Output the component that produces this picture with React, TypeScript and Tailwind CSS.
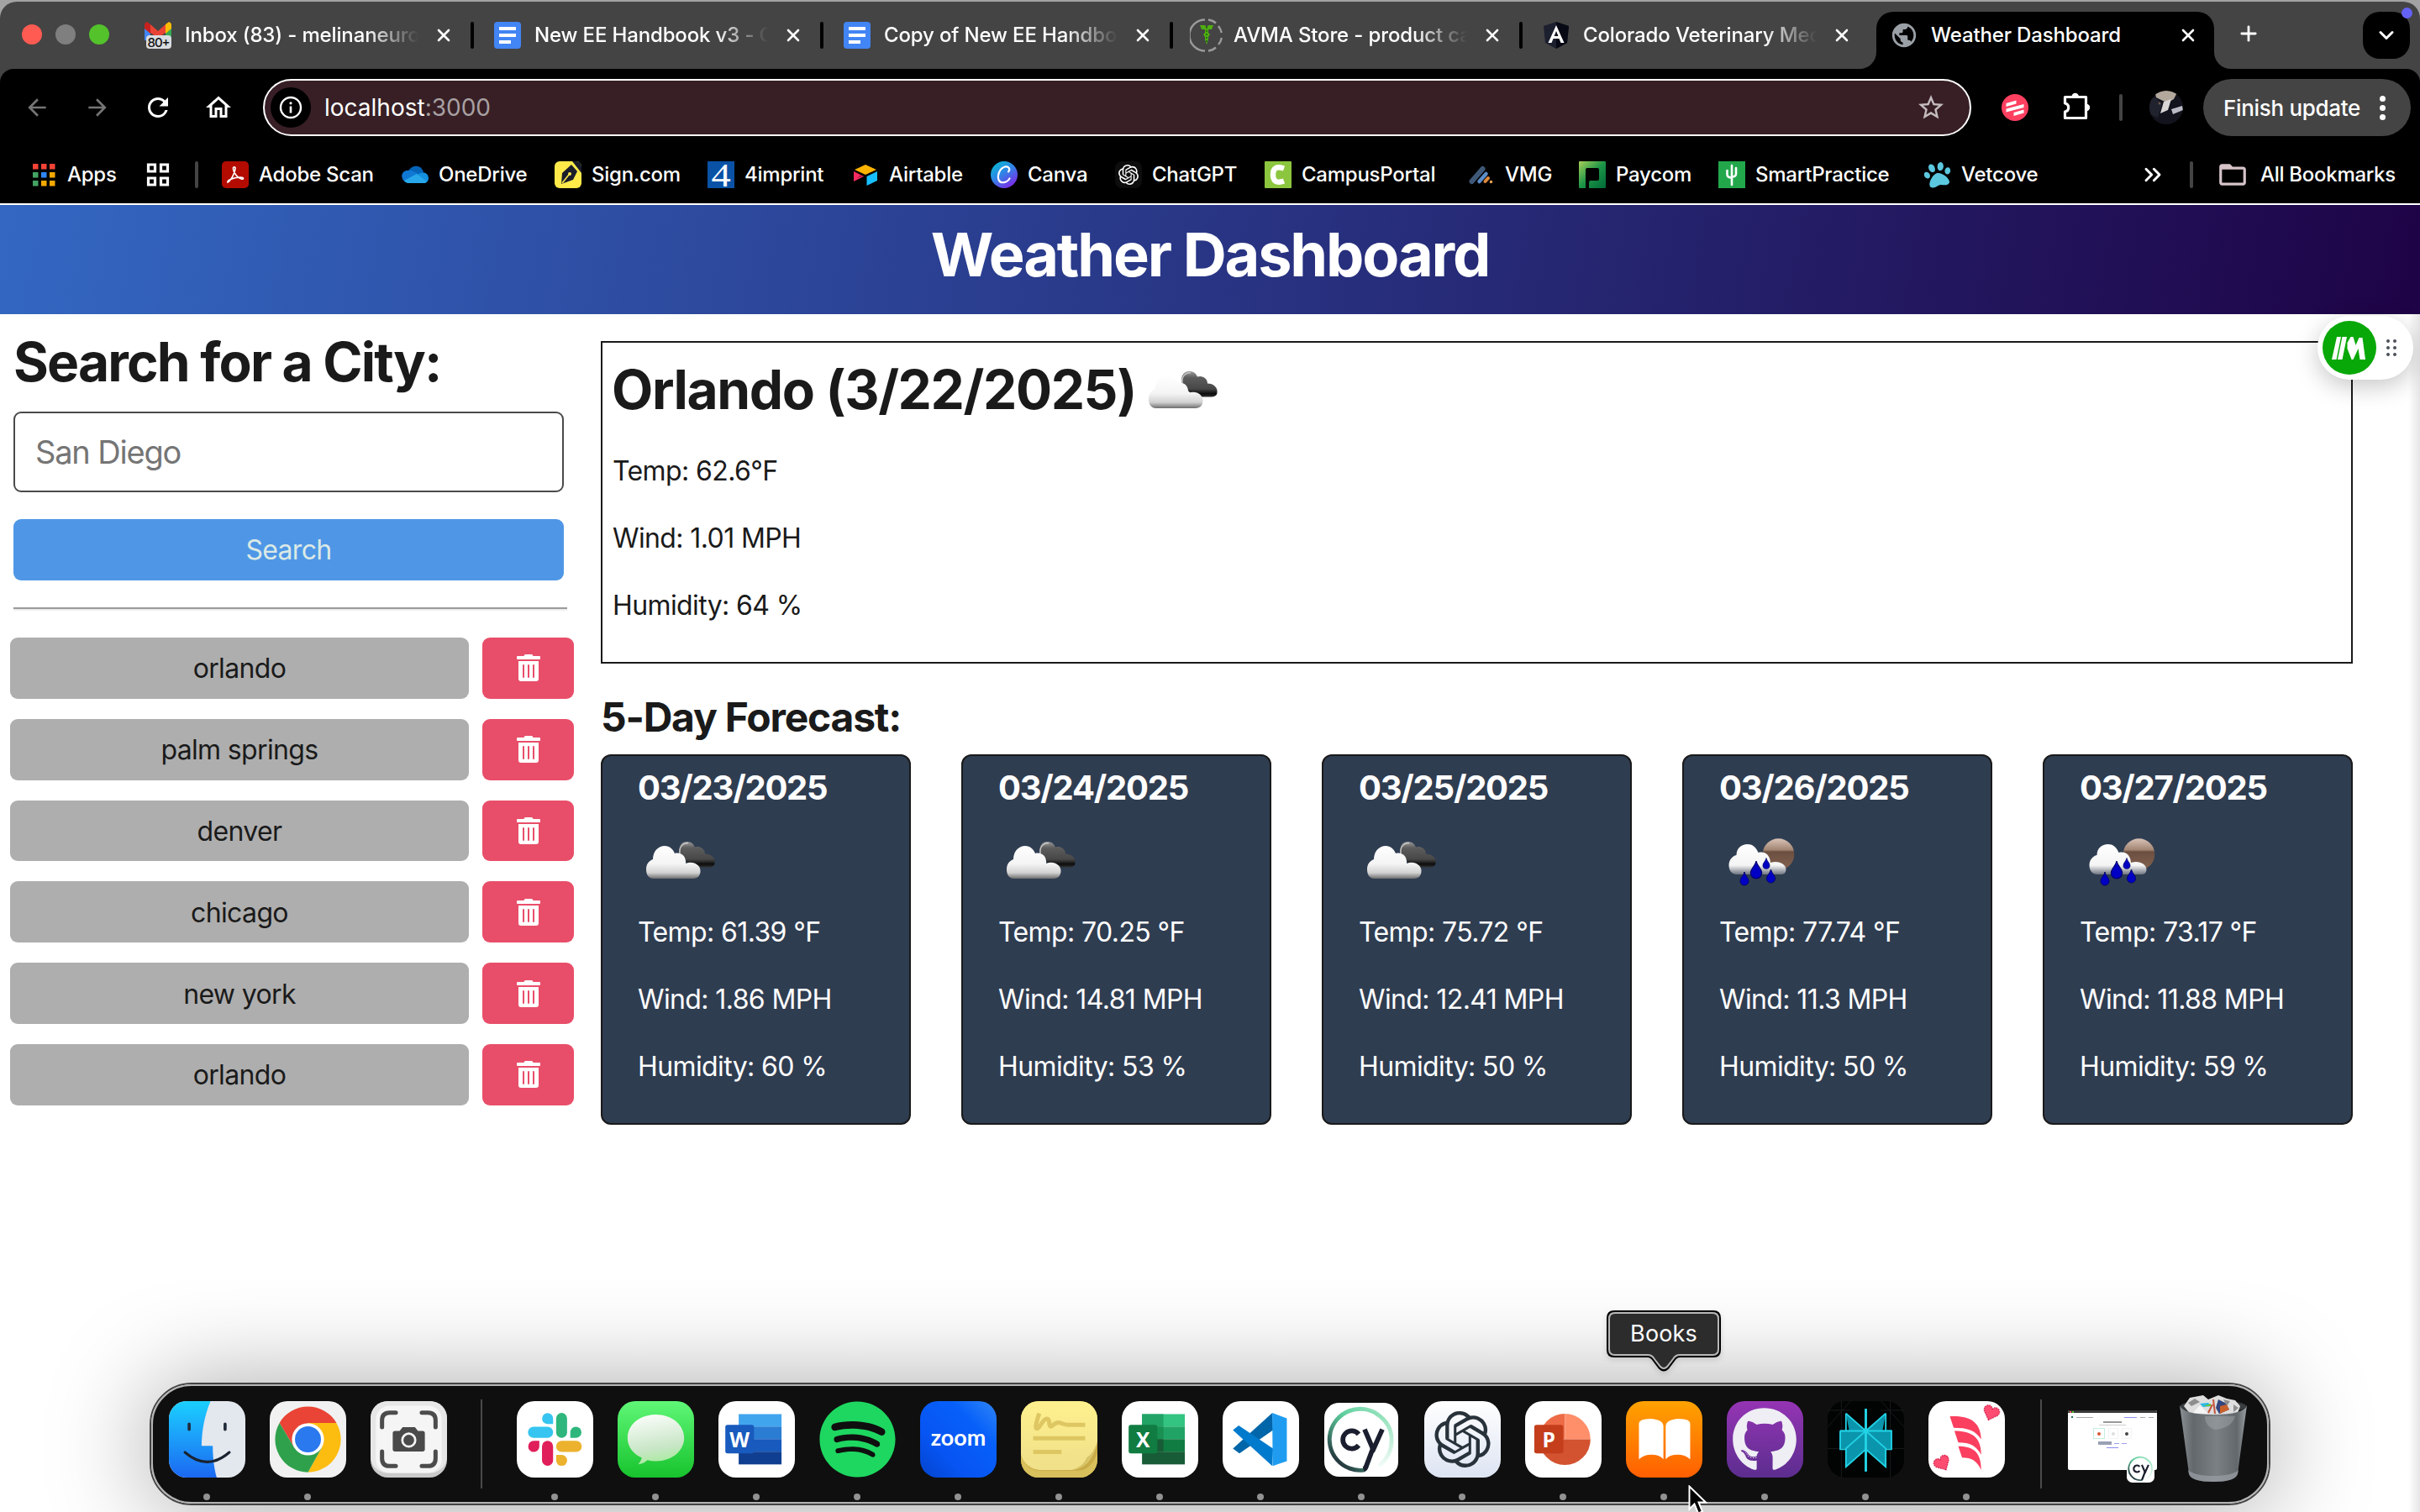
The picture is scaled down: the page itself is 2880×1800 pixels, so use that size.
import React from "react";
import { FaSpotify, FaGithub, FaTrashAlt, FaPaw } from "react-icons/fa";
import {
  MdArrowBack,
  MdArrowForward,
  MdRefresh,
  MdOutlineHome,
  MdStarBorder,
  MdFolderOpen,
  MdPublic,
} from "react-icons/md";
import { SiOpenai } from "react-icons/si";
import { ChevronDown, ChevronsRight, Plus, X } from "lucide-react";

type Kids = { children?: React.ReactNode };

/* ---------- browser tab icons ---------- */

function GmailIcon() {
  return (
    <svg viewBox="0 0 32 32" className="h-8 w-8 shrink-0 overflow-visible">
      <path d="M0 6v16h7V10z" fill="#4285f4" />
      <path d="M32 6v16h-7V10z" fill="#34a853" />
      <path d="M25 3l4-3q3 1 3 4v4l-7 6z" fill="#fbbc04" />
      <path d="M7 3L3 0Q0 1 0 4v4l7 6z" fill="#c5221f" />
      <path d="M7 3l9 8 9-8v10l-9 6-9-6z" fill="#ea4335" />
      <rect x="2" y="16" width="30" height="16" rx="4" fill="#dadce0" />
      <text x="17" y="29.500" textAnchor="middle" fontSize="15" fontFamily="Inter, sans-serif" fill="#111" textLength="27">
        80+
      </text>
    </svg>
  );
}

function DocsIcon() {
  return (
    <svg viewBox="0 0 32 32" className="h-8 w-8 shrink-0">
      <rect width="32" height="32" rx="4" fill="#4285f4" />
      <path d="M6 8h20M6 16h20M6 24h14" stroke="#fff" strokeWidth="4" />
    </svg>
  );
}

function AvmaIcon() {
  return (
    <svg viewBox="0 0 40 40" className="-mx-1 h-10 w-10 shrink-0">
      <path d="M18 1.500A18.500 18.500 0 0 0 18 38.500" fill="none" stroke="#9a9a9a" strokeWidth="2.400" />
      <path
        d="M22 1.500q5 .5 9 4M34 9q3 4 3.800 8M37.800 23q-.8 5-3.800 8M31 34.500q-4 3.500-9 4"
        fill="none"
        stroke="#9a9a9a"
        strokeWidth="2.400"
      />
      <path d="M12 8h6l2 3 2-3h6l-2 5h-4v4l2 2-2 3v3l-2 6-2-6v-3l-2-3 2-2v-4h-4z" fill="#4fae12" />
      <path d="M20 10v20" stroke="#1c5d09" strokeWidth="1.400" strokeDasharray="2 2" />
    </svg>
  );
}

function AngularIcon() {
  return (
    <svg viewBox="0 0 32 32" className="h-8 w-8 shrink-0">
      <path d="M16 0l15 5-2 20-13 7-13-7L1 5z" fill="#1c1f2e" />
      <path d="M16 0l15 5-2 20-13 7z" fill="#070915" />
      <path d="M16 4L6.500 25h4l2-5h7l2 5h4zm0 7l2.500 6h-5z" fill="#fff" />
    </svg>
  );
}

const tabs = [
  { icon: <GmailIcon />, title: "Inbox (83) - melinaneuro", sep: true },
  { icon: <DocsIcon />, title: "New EE Handbook v3 - G", sep: true },
  { icon: <DocsIcon />, title: "Copy of New EE Handbo", sep: true },
  { icon: <AvmaIcon />, title: "AVMA Store - product ca", sep: true },
  { icon: <AngularIcon />, title: "Colorado Veterinary Med", sep: false },
];

function TabStrip() {
  return (
    <div className="bg-[#a3a3a3] pt-[2px]">
      <div className="flex h-[80px] rounded-t-[20px] bg-[#444444] text-[24px] font-medium text-white">
        <div className="flex w-[152px] shrink-0 items-center gap-4 pb-[2px] pl-[26px]">
          <span className="h-6 w-6 rounded-full bg-[#ff5b52]" />
          <span className="h-6 w-6 rounded-full bg-[#7f7f7f]" />
          <span className="h-6 w-6 rounded-full bg-[#53c22b]" />
        </div>
        {tabs.map((t) => (
          <div key={t.title} className="flex w-[416px] shrink-0 items-center pl-5">
            {t.icon}
            <span className="ml-4 w-[280px] whitespace-nowrap tracking-[-0.006em] [mask-image:linear-gradient(90deg,#000_215px,transparent_278px)]">
              {t.title}
            </span>
            <X className="ml-[16px] h-6 w-6 shrink-0" strokeWidth={2.6} />
            {t.sep && <span className="ml-5 h-8 w-1 shrink-0 rounded-sm bg-black" />}
          </div>
        ))}
        <div className="relative ml-px mt-3 flex h-[68px] w-[402px] shrink-0 items-center rounded-t-[20px] bg-black pb-[12px] pl-[16px]">
          <MdPublic className="h-[34px] w-[34px] text-[#9aa0a6]" />
          <span className="ml-[15px] w-[286px] whitespace-nowrap tracking-[-0.006em]">Weather Dashboard</span>
          <X className="ml-[8px] h-6 w-6" strokeWidth={2.6} />
          <svg viewBox="0 0 20 20" className="absolute bottom-0 -left-5 h-5 w-5">
            <path d="M20 0v20H0A20 20 0 0 0 20 0z" fill="#000" />
          </svg>
          <svg viewBox="0 0 20 20" className="absolute -right-5 bottom-0 h-5 w-5">
            <path d="M0 0v20h20A20 20 0 0 1 0 0z" fill="#000" />
          </svg>
        </div>
        <Plus className="mt-[24px] ml-[27px] h-7 w-7" strokeWidth={2.4} />
        <div className="relative mt-3 mr-3 ml-auto flex h-14 w-14 items-center justify-center rounded-[20px] bg-black">
          <ChevronDown className="h-7 w-7" strokeWidth={2.6} />
          <span className="absolute -top-[5px] -right-[3px] h-[13px] w-[13px] rounded-full bg-[#6462f5]" />
        </div>
      </div>
    </div>
  );
}

function Avatar() {
  return (
    <svg viewBox="0 0 40 40" className="h-10 w-10">
      <defs>
        <clipPath id="avatar">
          <circle cx="20" cy="20" r="20" />
        </clipPath>
      </defs>
      <g clipPath="url(#avatar)">
        <rect width="40" height="40" fill="#12131c" />
        <path d="M6 0h28l-5 10-7 4-6-2L8 8z" fill="#b3a89c" />
        <path d="M17 13l9-3-4 13-9 4z" fill="#d9d6d6" />
        <path d="M26 22l13-4 1 5-12 5z" fill="#b9bac4" />
        <path d="M0 10l8-2 7 8-5 16-10-4z" fill="#20222e" />
        <circle cx="12" cy="15" r="1.500" fill="#6a5644" />
      </g>
    </svg>
  );
}

function PuzzleIcon() {
  return (
    <svg viewBox="0 0 40 40" className="ml-[38px] h-10 w-10">
      <path
        d="M5.500 7.500h25v25h-25v-7.500q4.200-.8 4.200-5t-4.200-5z"
        fill="none"
        stroke="#fff"
        strokeWidth="3.200"
        strokeLinejoin="round"
      />
      <path d="M13.500 7a4.200 4.200 0 0 1 8.400 0zM31 15.800a4.200 4.200 0 0 1 0 8.400z" fill="#fff" />
    </svg>
  );
}

function Toolbar() {
  return (
    <div className="bg-[#444444]">
      <div className="flex h-[92px] items-center rounded-t-[16px] bg-black pl-[24px] text-white">
        <div className="flex w-[289px] items-center gap-8">
          <MdArrowBack className="h-10 w-10 p-1 text-[#757575]" />
          <MdArrowForward className="h-10 w-10 p-1 text-[#757575]" />
          <MdRefresh className="h-10 w-10 p-0.5" />
          <MdOutlineHome className="h-10 w-10 p-0.5" />
        </div>
        <div className="flex h-[68px] w-[2033px] items-center rounded-full border-2 border-white bg-[#371f25] pl-[7px] text-[28px]">
          <span className="flex h-12 w-12 items-center justify-center rounded-full bg-black">
            <svg viewBox="0 0 28 28" className="h-7 w-7">
              <circle cx="14" cy="14" r="12" fill="none" stroke="#fff" strokeWidth="2.400" />
              <circle cx="14" cy="8.800" r="1.600" fill="#fff" />
              <path d="M14 12.500v8" stroke="#fff" strokeWidth="2.600" />
            </svg>
          </span>
          <span className="ml-[16px]">
            localhost<span className="text-[#a8a0a2]">:3000</span>
          </span>
          <MdStarBorder className="mr-[28px] ml-auto h-9 w-9 text-[#c4bcbe]" />
        </div>
        <svg viewBox="0 0 32 32" className="ml-9 h-8 w-8">
          <circle cx="16" cy="16" r="16" fill="#ff4060" />
          <path d="M5.500 11l12-3.500v4l-12 3.500zM5.500 17.500l21-5.500v4l-21 5.500zM14.500 22l12-3.500v4l-12 3.500z" fill="#fff" />
        </svg>
        <PuzzleIcon />
        <span className="ml-[30px] h-8 w-1 rounded-sm bg-[#444444]" />
        <span className="ml-[32px]">
          <Avatar />
        </span>
        <div className="ml-[24px] flex h-[68px] w-[247px] items-center rounded-full bg-[#444444] pl-6 text-[26px] font-medium">
          <span className="w-[168px] whitespace-nowrap tracking-[-0.012em]">Finish update</span>
          <span className="ml-[18px] flex flex-col gap-1">
            <span className="h-[7px] w-[7px] rounded-full bg-white" />
            <span className="h-[7px] w-[7px] rounded-full bg-white" />
            <span className="h-[7px] w-[7px] rounded-full bg-white" />
          </span>
        </div>
      </div>
    </div>
  );
}

/* ---------- bookmark icons ---------- */

function Ico({ children }: Kids) {
  return (
    <svg viewBox="0 0 32 32" className="h-8 w-8 shrink-0 overflow-visible">
      {children}
    </svg>
  );
}

function Mark({ icon, label, className }: { icon: React.ReactNode; label: string; className: string }) {
  return (
    <div className={"flex shrink-0 items-center gap-3 " + className}>
      {icon}
      <span className="whitespace-nowrap">{label}</span>
    </div>
  );
}

const appDots = ["#f44336", "#f44336", "#f44336", "#43a463", "#2f86f6", "#f5a800", "#43a463", "#f5a800", "#f5a800"];

function Bookmarks() {
  return (
    <div className="flex h-[68px] items-center bg-black pl-[36px] text-[24px] font-medium tracking-[-0.010em] text-white">
      <Mark
        className="w-[136px]"
        label="Apps"
        icon={
          <Ico>
            {appDots.map((c, i) => (
              <rect key={i} x={3 + (i % 3) * 10} y={3 + Math.floor(i / 3) * 10} width="6.500" height="6.500" fill={c} />
            ))}
          </Ico>
        }
      />
      <Ico>
        <path
          d="M4.500 4h8v8h-8zM19.500 4h8v8h-8zM4.500 20h8v8h-8zM19.500 20h8v8h-8z"
          fill="none"
          stroke="#fff"
          strokeWidth="3.200"
        />
      </Ico>
      <span className="mr-[28px] ml-[28px] h-8 w-1 rounded-sm bg-[#444444]" />
      <Mark
        className="w-[214px]"
        label="Adobe Scan"
        icon={
          <Ico>
            <rect width="32" height="32" rx="5" fill="#b30b00" />
            <path
              d="M7 25c-1-3 9-6 15-6 5 0 4 3 1 2-4-1-9-7-9.500-12-.3-3 3-3 2.500 0-.6 5-5 14-9 16z"
              fill="none"
              stroke="#fff"
              strokeWidth="1.700"
            />
          </Ico>
        }
      />
      <Mark
        className="w-[182px]"
        label="OneDrive"
        icon={
          <Ico>
            <path d="M8 12C12 3 24 4 26 13l-8 6z" fill="#0364b8" />
            <path d="M7 11c4-1 8 1 14 5l-16 9c-7-4-6-14 2-14z" fill="#0f78d4" />
            <path d="M18 17c3-4 13-6 14 3 0 4-3 6-5 6H14z" fill="#1490df" />
            <path d="M3 23l15-8 12 9q-2 2-4 2H7q-2 0-4-3z" fill="#28a8ea" />
          </Ico>
        }
      />
      <Mark
        className="w-[182px]"
        label="Sign.com"
        icon={
          <Ico>
            <rect width="32" height="32" rx="6" fill="#ffea4a" />
            <path d="M21 0h5q6 0 6 6v8z" fill="#1b1d2b" />
            <path d="M20 4l7 8-5 10-14 5 1-13z" fill="#1b1d2b" />
            <path d="M9 26l8-10" stroke="#ffea4a" strokeWidth="1.600" />
            <circle cx="18" cy="15" r="2" fill="#ffea4a" />
          </Ico>
        }
      />
      <Mark
        className="w-[172px]"
        label="4imprint"
        icon={
          <Ico>
            <rect width="32" height="32" fill="#0a52a5" />
            <text
              x="16"
              y="30"
              textAnchor="middle"
              fontSize="41"
              fontFamily="Liberation Serif, serif"
              fill="#fff"
              textLength="23"
              lengthAdjust="spacingAndGlyphs"
            >
              4
            </text>
          </Ico>
        }
      />
      <Mark
        className="w-[165px]"
        label="Airtable"
        icon={
          <Ico>
            <path d="M3 10l13-6 13 6-13 6z" fill="#fcb400" />
            <path d="M17.500 18L30 12v11l-12.500 6z" fill="#18bfff" />
            <path d="M2 12l12 6-12 6z" fill="#f82b60" />
            <path d="M6 20l8-2-4-2z" fill="#b51f4b" />
          </Ico>
        }
      />
      <Mark
        className="w-[148px]"
        label="Canva"
        icon={
          <Ico>
            <defs>
              <linearGradient id="canva" x1="0" y1="0" x2=".7" y2="1">
                <stop offset="0" stopColor="#00c4cc" />
                <stop offset=".5" stopColor="#2f86e6" />
                <stop offset="1" stopColor="#7d2ae8" />
              </linearGradient>
            </defs>
            <circle cx="16" cy="16" r="16" fill="url(#canva)" />
            <path
              d="M21 12.500c3-3.500 0-7-4-6-6 1.500-9.500 10-7.500 15.500 2 5 9.500 4 13-1.500"
              fill="none"
              stroke="#fff"
              strokeWidth="2.200"
              strokeLinecap="round"
            />
          </Ico>
        }
      />
      <Mark
        className="w-[178px]"
        label="ChatGPT"
        icon={
          <span className="flex h-8 w-8 items-center justify-center rounded-lg bg-[#0d0d0d]">
            <SiOpenai className="h-6 w-6" />
          </span>
        }
      />
      <Mark
        className="w-[242px]"
        label="CampusPortal"
        icon={
          <Ico>
            <rect width="32" height="32" rx="1" fill="#8cc63f" />
            <path d="M23 8.500c-9-3-13 0-13 7.500s4 10.500 13 7.500" fill="none" stroke="#fff" strokeWidth="6.500" />
          </Ico>
        }
      />
      <Mark
        className="w-[132px]"
        label="VMG"
        icon={
          <Ico>
            <path d="M4.500 24L17.500 9" stroke="#3f5878" strokeWidth="6" strokeLinecap="round" />
            <path d="M13.500 24l8-9" stroke="#5b8cc8" strokeWidth="4.500" strokeLinecap="round" />
            <path d="M20.500 24l3.500-4" stroke="#e08a3c" strokeWidth="4" strokeLinecap="round" />
            <circle cx="27.500" cy="24.500" r="1.700" fill="#f0a850" />
          </Ico>
        }
      />
      <Mark
        className="w-[166px]"
        label="Paycom"
        icon={
          <Ico>
            <defs>
              <linearGradient id="paycom" x1="0" y1="0" x2="1" y2="1">
                <stop offset="0" stopColor="#a6d05a" />
                <stop offset=".5" stopColor="#1c9447" />
                <stop offset="1" stopColor="#006a38" />
              </linearGradient>
            </defs>
            <rect width="32" height="32" rx="1" fill="url(#paycom)" />
            <path d="M8 32V10q0-2 2-2h12q2 0 2 2v11q0 2-2 2h-8q-2 0-2 3v6z" fill="#000" />
          </Ico>
        }
      />
      <Mark
        className="w-[245px]"
        label="SmartPractice"
        icon={
          <Ico>
            <rect width="32" height="32" fill="#22a84b" />
            <path d="M16 5v23M10.500 11v4.500q0 4 5.500 4M21 8v7q0 3.500-5 3.500" fill="none" stroke="#fff" strokeWidth="2.600" strokeLinecap="round" />
          </Ico>
        }
      />
      <Mark className="w-[256px]" label="Vetcove" icon={<FaPaw className="h-8 w-8 -rotate-12 text-[#5bc8e0]" />} />
      <ChevronsRight className="h-8 w-8" strokeWidth={2.2} />
      <span className="mr-[28px] ml-[28px] h-8 w-1 rounded-sm bg-[#444444]" />
      <MdFolderOpen className="h-[38px] w-[38px] shrink-0 text-[#d6c4c8]" />
      <span className="ml-[14px] whitespace-nowrap tracking-[-0.012em]">All Bookmarks</span>
    </div>
  );
}

/* ---------- weather drawings ---------- */

function Gradients() {
  return (
    <svg className="absolute h-0 w-0">
      <defs>
        <linearGradient id="white-cloud" x1="0" y1="0" x2="0" y2="1">
          <stop offset="0" stopColor="#fff" />
          <stop offset=".55" stopColor="#f4f4f4" />
          <stop offset=".82" stopColor="#d2d2d2" />
          <stop offset="1" stopColor="#6e6e6e" />
        </linearGradient>
        <linearGradient id="rain-cloud" x1="0" y1="0" x2="0" y2="1">
          <stop offset="0" stopColor="#fff" />
          <stop offset=".7" stopColor="#f4f4f4" />
          <stop offset="1" stopColor="#6e7480" />
        </linearGradient>
        <linearGradient id="dark-cloud" x1="0" y1="0" x2="0" y2="1">
          <stop offset="0" stopColor="#9a9a9a" />
          <stop offset=".25" stopColor="#5c5c5c" />
          <stop offset=".68" stopColor="#484848" />
          <stop offset=".88" stopColor="#0c0c0c" />
          <stop offset="1" stopColor="#333" />
        </linearGradient>
        <linearGradient id="moon" x1="0" y1="0" x2="0" y2="1">
          <stop offset="0" stopColor="#d8c2b6" />
          <stop offset=".36" stopColor="#a38673" />
          <stop offset=".42" stopColor="#6b4f40" />
          <stop offset="1" stopColor="#846350" />
        </linearGradient>
        <filter id="soft-edge">
          <feGaussianBlur stdDeviation=".6" />
        </filter>
      </defs>
    </svg>
  );
}

function BrokenClouds() {
  return (
    <svg viewBox="0 0 100 100" className="h-[100px] w-[100px] shrink-0">
      <g filter="url(#soft-edge)">
        <path
          d="M48 44C45 34 50 28 56 28c5 0 8 2 10 6.500 6-2 12 2 12 8 7 0 12.500 5 11.500 10.500 0 4-3 5.500-8 5.500H62z"
          fill="url(#dark-cloud)"
        />
        <path d="M48 42c-1-8 4-13 10-12" fill="none" stroke="#c8c8c8" strokeWidth="1.500" />
        <path
          d="M17 72C10 72 8 66 8 61c0-6 3-10 8-12 0-9 6-16 14-16 6 0 10 4 12 9 8-2 14 4 13 12 9-4 18 2 17.500 9 0 5-3 9-9 9z"
          fill="url(#white-cloud)"
        />
      </g>
    </svg>
  );
}

function RainDrop({ x, y, s }: { x: number; y: number; s: number }) {
  return (
    <path
      transform={`translate(${x} ${y}) scale(${s})`}
      d="M0 0C1 6 6.500 9 6.500 14A6.500 6.500 0 0 1-6.500 14C-6.500 9-1 6 0 0z"
      fill="#0505c4"
      stroke="#00006a"
      strokeWidth="1.200"
    />
  );
}

function Rain() {
  return (
    <svg viewBox="0 0 100 100" className="h-[100px] w-[100px] shrink-0">
      <g filter="url(#soft-edge)">
        <circle cx="68.500" cy="43" r="18.800" fill="url(#moon)" />
        <path
          d="M18 67C11 66 9.500 60 9.500 56c0-6 4-11 9-12 0-8 6-13 13-13 6 0 10 3 13 10 7-2 14 2 14.500 12 9-3 18 1 18.500 8 0 3-2 6-5 6z"
          fill="url(#rain-cloud)"
        />
        <RainDrop x={42} y={51} s={1.02} />
        <RainDrop x={54} y={47.5} s={0.62} />
        <RainDrop x={28} y={64} s={0.78} />
        <RainDrop x={59.5} y={61} s={0.78} />
      </g>
    </svg>
  );
}

/* ---------- page ---------- */

const history = ["orlando", "palm springs", "denver", "chicago", "new york", "orlando"];

const forecast = [
  { date: "03/23/2025", icon: <BrokenClouds />, temp: "61.39", wind: "1.86", hum: "60" },
  { date: "03/24/2025", icon: <BrokenClouds />, temp: "70.25", wind: "14.81", hum: "53" },
  { date: "03/25/2025", icon: <BrokenClouds />, temp: "75.72", wind: "12.41", hum: "50" },
  { date: "03/26/2025", icon: <Rain />, temp: "77.74", wind: "11.3", hum: "50" },
  { date: "03/27/2025", icon: <Rain />, temp: "73.17", wind: "11.88", hum: "59" },
];

function Sidebar() {
  return (
    <aside className="w-[715px] shrink-0 pt-[25px] text-[32px] text-[#1a1a1a]">
      <h2 className="ml-4 text-[64px] leading-[64px] font-bold tracking-[-0.0285em] whitespace-nowrap">Search for a City:</h2>
      <div className="mt-[27px] ml-4 flex h-24 w-[655px] items-center rounded-[9px] border-2 border-[#4a4a4a] pl-6 text-[38px] tracking-[-0.031em] text-[#757575]">
        San Diego
      </div>
      <div className="mt-8 ml-4 flex h-[73px] w-[655px] items-center justify-center rounded-[9px] bg-[#4f97e6] tracking-[-0.022em] text-[#dbe9e6]">
        Search
      </div>
      <div className="mt-8 ml-4 h-1 w-[659px] border-t-2 border-b-2 border-t-[#9a9a9a] border-b-[#eeeeee]" />
      <div className="mt-8 ml-3 flex flex-col gap-6">
        {history.map((city, i) => (
          <div key={i} className="flex h-[72.8px] gap-4">
            <div className="flex w-[546px] items-center justify-center rounded-[9px] bg-[#aeaeae] pt-[2px] tracking-[-0.02em]">{city}</div>
            <div className="flex w-[109px] items-center justify-center rounded-[9px] bg-[#e84e69]">
              <FaTrashAlt className="h-8 w-7 text-white" />
            </div>
          </div>
        ))}
      </div>
    </aside>
  );
}

function Dashboard() {
  return (
    <div className="flex">
      <Sidebar />
      <main className="w-[2085px] pt-8 text-[32px] tracking-[-0.019em] text-[#1a1a1a]">
        <section className="h-[384px] border-2 border-[#1a1a1a] pt-6 pl-3">
          <div className="-ml-px flex h-16 items-center gap-[7px]">
            <h2 className="text-[64px] leading-[64px] font-bold tracking-[-0.0215em] whitespace-nowrap">Orlando (3/22/2025)</h2>
            <BrokenClouds />
          </div>
          <div className="mt-[25px] leading-[80px]">
            <p>Temp: 62.6°F</p>
            <p>Wind: 1.01 MPH</p>
            <p>Humidity: 64 %</p>
          </div>
        </section>
        <h3 className="mt-[40px] text-[48px] leading-[48px] font-bold tracking-[-0.0255em]">5-Day Forecast:</h3>
        <div className="mt-[20px] grid grid-cols-5 gap-[60px]">
          {forecast.map((d) => (
            <article key={d.date} className="h-[441px] rounded-[12px] border-2 border-[#1a1a1a] bg-[#2f3d51] pt-[17px] pl-[42px] text-white">
              <h4 className="text-[40px] leading-[41px] font-bold tracking-[-0.031em]">{d.date}</h4>
              <div className="mt-[16px] ml-[2px]">{d.icon}</div>
              <div className="-mt-[4px] leading-[80px] whitespace-nowrap">
                <p>Temp: {d.temp} °F</p>
                <p>Wind: {d.wind} MPH</p>
                <p>Humidity: {d.hum} %</p>
              </div>
            </article>
          ))}
        </div>
      </main>
    </div>
  );
}

function SideWidget() {
  return (
    <div className="absolute top-[376px] right-2 flex h-[76px] w-[114px] items-center rounded-full bg-white pl-1.5 shadow-[0_8px_28px_rgba(0,0,0,0.22)]">
      <svg viewBox="0 0 64 64" className="h-16 w-16">
        <circle cx="32" cy="32" r="32" fill="#08a808" />
        <path
          d="M17 19h5l-5.500 27H11zM23.500 19h5.500l-5.500 27H18zM29.500 26l4-7h3l3 10 4-9h4l3.500 26h-6.500l-2-13-6 13h-2l-5-13z"
          fill="#fff"
        />
      </svg>
      <span className="ml-3 grid grid-cols-2 gap-1">
        {[0, 1, 2, 3, 4, 5].map((i) => (
          <span key={i} className="h-1 w-1 rounded-full bg-[#4b5058]" />
        ))}
      </span>
    </div>
  );
}

/* ---------- dock ---------- */

function Tile({ children, fill = "#fff" }: Kids & { fill?: string }) {
  return (
    <svg viewBox="0 0 100 100" className="h-[91px] w-[91px]">
      <rect width="100" height="100" rx="23" fill={fill} />
      {children}
    </svg>
  );
}

function Finder() {
  return (
    <Tile fill="#e3e7ee">
      <defs>
        <linearGradient id="finder" x1="0" y1="0" x2="0" y2="1">
          <stop offset="0" stopColor="#1bd0ff" />
          <stop offset="1" stopColor="#1c68f2" />
        </linearGradient>
      </defs>
      <path d="M54.500 0C46 20 43 40 42.700 58.600h14.600C57.500 74 59 88 62.500 100H23A23 23 0 0 1 0 77V23A23 23 0 0 1 23 0z" fill="url(#finder)" />
      <path d="M26.500 30v7M73.500 30v7" stroke="#1f2a3a" strokeWidth="4" strokeLinecap="round" />
      <path d="M21 67q29 25 58 0" fill="none" stroke="#1a2230" strokeWidth="3.400" strokeLinecap="round" />
    </Tile>
  );
}

function Chrome() {
  return (
    <Tile fill="#f1f1f1">
      <path d="M12.800 28.500A43 43 0 0 1 87.200 28.500H50L31.800 60.500z" fill="#e94435" />
      <path d="M87.200 28.500A43 43 0 0 1 50 93L68.200 60.500 50 28.500z" fill="#fcbc10" />
      <path d="M50 93A43 43 0 0 1 12.800 28.500L31.800 60.500H68.200z" fill="#2fa14c" />
      <circle cx="50" cy="50" r="21" fill="#fff" />
      <circle cx="50" cy="50" r="17" fill="#2a79ee" />
    </Tile>
  );
}

function Screenshot() {
  return (
    <Tile fill="#c9c9c9">
      <rect width="100" height="94" rx="22" fill="#e6e6e6" />
      <rect x="7" y="6" width="86" height="88" rx="18" fill="#f5f5f5" />
      <path
        d="M15 34v-9q0-10 10-10h8M67 15h8q10 0 10 10v9M15 66v9q0 10 10 10h8M67 85h8q10 0 10-10v-9"
        fill="none"
        stroke="#4c4c4c"
        strokeWidth="5.500"
        strokeLinecap="round"
      />
      <path d="M29 42q0-3 3-3h6l4-5h16l4 5h6q3 0 3 3v21q0 3-3 3H32q-3 0-3-3z" fill="#4a4a4a" />
      <circle cx="50" cy="51" r="8.500" fill="#4a4a4a" stroke="#f5f5f5" strokeWidth="3" />
    </Tile>
  );
}

function Slack() {
  return (
    <Tile>
      <g fill="#36c5f0">
        <path d="M47.500 30h-7A7.200 7.200 0 1 1 47.500 22.700z" />
        <rect x="14.700" y="33.500" width="32.800" height="14.500" rx="7.200" />
      </g>
      <g fill="#2eb67d">
        <rect x="51.500" y="15.500" width="14.300" height="32.500" rx="7.200" />
        <path d="M70 48v-7.200A7.300 7.300 0 1 1 77.300 48z" />
      </g>
      <g fill="#e01e5a">
        <path d="M29.500 52v7A7.300 7.300 0 1 1 22.200 52z" />
        <rect x="33" y="52" width="14.500" height="32.600" rx="7.200" />
      </g>
      <g fill="#ecb22e">
        <rect x="51.500" y="52" width="33.500" height="14.500" rx="7.200" />
        <path d="M51.500 70.300h7.200A7.200 7.200 0 1 1 51.500 77.500z" />
      </g>
    </Tile>
  );
}

function Messages() {
  return (
    <Tile fill="url(#messages)">
      <defs>
        <linearGradient id="messages" x1="0" y1="0" x2="0" y2="1">
          <stop offset="0" stopColor="#5ff777" />
          <stop offset="1" stopColor="#17c32d" />
        </linearGradient>
        <linearGradient id="bubble" x1="0" y1="0" x2=".2" y2="1">
          <stop offset="0" stopColor="#fff" />
          <stop offset=".75" stopColor="#c8e6c6" />
          <stop offset="1" stopColor="#aeeaa6" />
        </linearGradient>
      </defs>
      <path
        d="M50 17.500c21 0 37 13.500 37 30.500S71 78.500 50 78.500q-6 0-11-1.300-5 5-12 5.500 4-4 4.500-8.700C20 69 13 59 13 48c0-17 16-30.500 37-30.500z"
        fill="url(#bubble)"
      />
    </Tile>
  );
}

function Office({ letter, bands, badge }: { letter: string; bands: string[]; badge: string }) {
  return (
    <Tile>
      {bands.map((c, i) => (
        <rect key={i} x="26.500" y={17 + i * 16.4} width="56" height="16.600" fill={c} />
      ))}
      {letter === "X" && (
        <>
          <path d="M26.500 17h28v16.400h-28z" fill="#21a366" />
          <path d="M26.500 33.400h28v16.400h-28z" fill="#1a8f52" />
          <path d="M26.500 49.800h28v16.400h-28z" fill="#185c37" />
        </>
      )}
      <rect x="9" y="31" width="37.500" height="37.500" rx="3" fill={badge} />
      <text x="27.700" y="60" textAnchor="middle" fontSize="27" fontWeight="700" fontFamily="Open Sans, sans-serif" fill="#fff">
        {letter}
      </text>
    </Tile>
  );
}

function PowerPoint() {
  return (
    <Tile>
      <path d="M52 16.500A33.500 33.500 0 0 0 18.500 50H52z" fill="#ed6c47" />
      <path d="M52 16.500A33.500 33.500 0 0 1 85.500 50H52z" fill="#ff8f6b" />
      <path d="M18.500 50a33.500 33.500 0 0 0 67 0z" fill="#d35230" />
      <rect x="12" y="31" width="38" height="37.500" rx="3" fill="#c43e1c" />
      <text x="31" y="60" textAnchor="middle" fontSize="27" fontWeight="700" fontFamily="Open Sans, sans-serif" fill="#fff">
        P
      </text>
    </Tile>
  );
}

function Zoom() {
  return (
    <Tile fill="url(#zoomapp)">
      <defs>
        <linearGradient id="zoomapp" x1="1" y1="0" x2="0" y2="1">
          <stop offset="0" stopColor="#2f86f5" />
          <stop offset=".3" stopColor="#0760fa" />
          <stop offset=".7" stopColor="#0754f2" />
          <stop offset="1" stopColor="#0344cc" />
        </linearGradient>
      </defs>
      <text
        x="50"
        y="58"
        textAnchor="middle"
        fontSize="30"
        fontWeight="700"
        fontFamily="Lato, sans-serif"
        fill="#fff"
        textLength="72"
        lengthAdjust="spacingAndGlyphs"
      >
        zoom
      </text>
    </Tile>
  );
}

function Stickies() {
  return (
    <Tile fill="#c9ac48">
      <defs>
        <linearGradient id="sticky" x1="0" y1="0" x2="0" y2="1">
          <stop offset="0" stopColor="#fff08e" />
          <stop offset="1" stopColor="#efe08a" />
        </linearGradient>
      </defs>
      <path d="M0 77v-6q8 20 24 20h50q18 0 26-24v10a23 23 0 0 1-23 23H23A23 23 0 0 1 0 77z" fill="#d8c05c" />
      <path d="M0 23A23 23 0 0 1 23 0h54a23 23 0 0 1 23 23v30Q92 88 66 90H24Q6 88 0 70z" fill="url(#sticky)" />
      <path d="M100 52Q92 88 66 90 82 86 86 74q9-5 14-22z" fill="#d8c468" />
      <g fill="none" stroke="#dec763" strokeWidth="5.500">
        <path d="M24 16q-7 20-3 20c4 0 7-13 13-13 5 0 1 11 6 10q5-5 10-5 8 3 12 3h22" />
        <path d="M16 48.500h68M16 66.500h37" />
      </g>
    </Tile>
  );
}

function VsCode() {
  return (
    <Tile>
      <path d="M65 15.400L66 38 22 68.500 13.500 62z" fill="#0065a9" />
      <path d="M21 32l45 30-1 23L13.500 38z" fill="#007acc" />
      <path d="M65 15.400L84 22.500v56L65.500 85z" fill="#1f9cf0" />
    </Tile>
  );
}

function Cypress({ className }: { className: string }) {
  return (
    <svg viewBox="0 0 100 100" className={className}>
      <defs>
        <linearGradient id="cyring" x1=".9" y1="0" x2=".2" y2="1">
          <stop offset="0" stopColor="#8fe0b8" />
          <stop offset=".35" stopColor="#5fcf9d" />
          <stop offset=".7" stopColor="#3f7f6c" />
          <stop offset="1" stopColor="#1b1e2e" />
        </linearGradient>
        <linearGradient id="cyfade" x1="0" y1="0" x2="0" y2="1">
          <stop offset="0" stopColor="#8fe0b8" />
          <stop offset="1" stopColor="#f2fbf7" />
        </linearGradient>
      </defs>
      <rect width="100" height="100" rx="20" fill="#fff" />
      <path d="M71 15Q91 28 91 50q0 22-17 35" fill="none" stroke="url(#cyfade)" strokeWidth="5.500" />
      <path d="M72 15.500A41.500 41.500 0 1 0 53 91q3-1 4-5l7-20" fill="none" stroke="url(#cyring)" strokeWidth="5.500" />
      <path d="M53 90q3-1 4-5l9-24" fill="none" stroke="#1b1e2e" strokeWidth="6.500" />
      <path d="M46.500 42.500A12 12 0 1 0 46.500 57.500" fill="none" stroke="#1b1e2e" strokeWidth="6.500" />
      <path d="M54.500 36L66 63M78.500 36L65 66" fill="none" stroke="#1b1e2e" strokeWidth="6.500" />
    </svg>
  );
}

function ChatGpt() {
  return (
    <span className="flex h-[91px] w-[91px] items-center justify-center rounded-[21px] bg-linear-to-b from-white to-[#dde4f2]">
      <SiOpenai className="h-[67px] w-[67px] text-[#28323a]" />
    </span>
  );
}

function Books() {
  return (
    <Tile fill="url(#books)">
      <defs>
        <linearGradient id="books" x1="0" y1="0" x2="0" y2="1">
          <stop offset="0" stopColor="#ffa200" />
          <stop offset="1" stopColor="#ff5f00" />
        </linearGradient>
      </defs>
      <path d="M17 30q0-7 15-7 17 1 17 10v43q-5-6-16-6-9 0-16 6z" fill="#fff" />
      <path d="M84 30q0-7-15-7-17 1-17 10v43q5-6 16-6 9 0 16 6z" fill="#fff" />
    </Tile>
  );
}

function GithubApp() {
  return (
    <span className="flex h-[91px] w-[91px] items-center justify-center rounded-[21px] bg-linear-to-b from-[#9534b4] to-[#5c2d8f]">
      <FaGithub className="h-[78px] w-[78px] text-[#eeeef4]" />
    </span>
  );
}

function Perplexity() {
  return (
    <Tile fill="#020303">
      <g fill="none" stroke="#1a1d1e" strokeWidth="1">
        <path d="M18 0v100M82 0v100M0 12h30M70 12h30M0 62h100M30 0l-30 34M70 0l30 34" />
      </g>
      <g fill="#0b95ac">
        <path d="M24 16l26 23v24L24 86V62h-8V38h12z" />
        <path d="M76 16L50 39v24l26 23V62h8V38H72z" />
      </g>
      <g fill="none" stroke="#22d3e6" strokeWidth="2">
        <path d="M50 10v82M24 16l26 23 26-23M24 16v22M76 16v22M16.500 39h67v24H76M16.500 39v24H24M50 39L24 62v24l26-23M50 39l26 23v24L50 63" />
      </g>
      <path d="M50 10v82" stroke="#22d3e6" strokeWidth="3.200" />
    </Tile>
  );
}

function Heart({ x, y, r }: { x: number; y: number; r: number }) {
  return (
    <path
      transform={`translate(${x} ${y}) rotate(${r})`}
      d="M0 10L-9 1q-3-5 1-8 5-3 8 2 3-5 8-2 4 3 1 8z"
      fill="#ff4d72"
      stroke="#d92650"
      strokeWidth="1.600"
      strokeDasharray="2 1"
    />
  );
}

function PinkApp() {
  return (
    <Tile>
      <g fill="#fb3f5f">
        <path d="M28 20c22-1 40 4 41 30-8-12-18-15-36-15z" />
        <path d="M34 39c20 0 35 6 35 31-7-12-14-16-30-16z" />
        <path d="M39 59c18 0 30 6 30 31-6-12-12-16-25-16z" />
      </g>
      <Heart x={82} y={15} r={20} />
      <Heart x={18} y={81} r={-30} />
    </Tile>
  );
}

function Thumb() {
  return (
    <div className="relative h-[71px] w-[106px] rounded-[2px] bg-white">
      <div className="flex h-[3px] items-center gap-[1px] rounded-t-[2px] bg-[#3a3a3a] pl-[2px]">
        <span className="h-[2px] w-[2px] bg-[#ff5b52]" />
        <span className="h-[2px] w-[2px] bg-[#53c22b]" />
      </div>
      <div className="flex h-1.5 items-center gap-1 px-1 pt-1">
        <span className="h-[2px] w-[2px] bg-[#2a6f55]" />
        <span className="h-[1px] w-5 bg-[#aaa]" />
        <span className="ml-auto h-[1px] w-[15px] bg-[#8f93f0]" />
        <span className="h-[1px] w-[6px] bg-[#aaa]" />
        <span className="h-[1px] w-[6px] bg-[#aaa]" />
      </div>
      <div className="mx-auto mt-1 h-[2px] w-[22px] bg-[#999]" />
      <div className="mx-auto mt-[2px] h-[1px] w-8 bg-[#ccc]" />
      <div className="mt-[3px] flex justify-center gap-1">
        <span className="flex h-[13px] w-[14px] items-center justify-center border border-[#c4eedb]">
          <span className="h-1 w-1 rounded-full bg-[#d95b3a]" />
        </span>
        <span className="flex h-[13px] w-3 items-center justify-center border border-[#f3f3f3]">
          <span className="h-1 w-1 rounded-full bg-[#ddd]" />
        </span>
        <span className="flex h-[13px] w-3 items-center justify-center border border-[#f3f3f3]">
          <span className="h-1 w-1 rounded-full bg-[#444]" />
        </span>
      </div>
      <div className="mt-[3px] flex items-center justify-center gap-[3px]">
        <span className="h-1 w-4 bg-[#9aa0b5]" />
        <span className="h-[1px] w-[6px] bg-[#9a9ef0]" />
        <span className="h-[1px] w-[6px] bg-[#9a9ef0]" />
      </div>
      <div className="mx-auto mt-[3px] h-[1px] w-[14px] bg-[#8a8ef0]" />
      <Cypress className="absolute top-[53px] left-[70px] h-[33px] w-[33px]" />
    </div>
  );
}

function Trash() {
  return (
    <svg viewBox="0 0 80 104" className="h-[104px] w-[80px]">
      <defs>
        <linearGradient id="bin" x1="0" y1="0" x2="1" y2="0">
          <stop offset="0" stopColor="#8b9195" />
          <stop offset=".2" stopColor="#62686c" />
          <stop offset=".55" stopColor="#7a8084" />
          <stop offset=".85" stopColor="#62686c" />
          <stop offset="1" stopColor="#989ea2" />
        </linearGradient>
      </defs>
      <path d="M1 14q0-6 39-6t39 6-39 10T1 14z" fill="#3a3d3f" />
      <path d="M5 14L12 4l16-3 6 5 12-5 10 4 10 2 6 7-4 11H14z" fill="#dedede" />
      <path d="M10 10l8-5 6 4-10 5zM52 6l8 2-4 6zM64 12l6 4-6 5z" fill="#8e8e8e" />
      <path d="M24 11l10-1 4 4-10 1z" fill="#28b8e8" />
      <path d="M28 14l9-3v3z" fill="#6ac43a" />
      <path d="M46 6l8 4 5 8-12 5-4-7z" fill="#33457c" />
      <path d="M48 14l8-2 3 6-11 5z" fill="#c8602c" />
      <path d="M40 6l2 17M34 22l5-10" stroke="#c55238" strokeWidth="2" />
      <path d="M16 22l8-9 10 10z" fill="#f5f5f5" />
      <path d="M0 13q4 11 40 11t40-11L69 94q-2 10-29 10T11 94z" fill="url(#bin)" />
      <path d="M10 90q8 7 30 7t30-7l-1 5q-3 9-29 9t-29-9z" fill="#9aa0a5" opacity=".7" />
      <path d="M30 26h36q-4 14-24 16-12-4-12-16z" fill="#b5babd" opacity=".35" />
    </svg>
  );
}

function Slot({ children, running = true }: Kids & { running?: boolean }) {
  return (
    <div className="flex w-[120px] shrink-0 flex-col items-center">
      <div className="mt-[17px] flex h-[93px] items-center">{children}</div>
      {running && <span className="mt-[18px] h-2 w-2 rounded-full bg-[#929292]" />}
    </div>
  );
}

function Tooltip() {
  return (
    <div className="absolute top-[1560px] left-[1912px] flex h-[56px] w-[136px] items-center justify-center text-[27px] text-white">
      <svg viewBox="0 0 136 74" className="absolute top-0 left-0 h-[74px] w-[136px] drop-shadow-md">
        <path
          d="M9 1h118q8 0 8 8v38q0 8-8 8H87q-4 0-7 5l-7 9q-5 5-10 0l-7-9q-3-5-7-5H9q-8 0-8-8V9q0-8 8-8z"
          fill="#2c2c2c"
          stroke="#000"
          strokeWidth="2"
        />
        <path
          d="M10 3h116q7 0 7 7v36q0 7-7 7H87q-5 0-8 5l-7 9q-4 4-8 0l-7-9q-3-5-8-5H10q-7 0-7-7V10q0-7 7-7z"
          fill="none"
          stroke="#b8b8b8"
          strokeWidth="2"
        />
      </svg>
      <span className="relative pt-px tracking-[0.005em]">Books</span>
    </div>
  );
}

function Dock() {
  return (
    <div className="absolute top-[1646px] left-[178px] h-[146px] w-[2524px] rounded-[50px] border-2 border-[#444444] shadow-[0_4px_120px_rgba(0,0,0,0.36)]">
      <div className="flex h-full w-full rounded-[48px] border-2 border-[#b4b4b4] bg-[#0f0f0f] pl-1">
        <Slot><Finder /></Slot>
        <Slot><Chrome /></Slot>
        <Slot running={false}><Screenshot /></Slot>
        <span className="mx-[26px] mt-4 h-[106px] w-[2px] shrink-0 bg-[#4a4a4a]" />
        <Slot><Slack /></Slot>
        <Slot><Messages /></Slot>
        <Slot><Office letter="W" badge="#185abd" bands={["#41a5ee", "#2b7cd3", "#185abd", "#103f91"]} /></Slot>
        <Slot><FaSpotify className="h-[93px] w-[93px] text-[#1ed760]" /></Slot>
        <Slot><Zoom /></Slot>
        <Slot><Stickies /></Slot>
        <Slot><Office letter="X" badge="#107c41" bands={["#33c481", "#21a366", "#107c41", "#185c37"]} /></Slot>
        <Slot><VsCode /></Slot>
        <Slot><Cypress className="h-[88px] w-[88px]" /></Slot>
        <Slot><ChatGpt /></Slot>
        <Slot><PowerPoint /></Slot>
        <Slot><Books /></Slot>
        <Slot><GithubApp /></Slot>
        <Slot><Perplexity /></Slot>
        <Slot><PinkApp /></Slot>
        <span className="mt-4 mr-[31px] ml-[28px] h-[106px] w-[2px] shrink-0 bg-[#4a4a4a]" />
        <div className="mt-[29px]">
          <Thumb />
        </div>
        <div className="mt-[10px] ml-[27px]">
          <Trash />
        </div>
      </div>
    </div>
  );
}

export default function App() {
  return (
    <div className="relative h-[1800px] w-[2880px] overflow-hidden bg-white font-[Inter,'Liberation_Sans',sans-serif]">
      <Gradients />
      <TabStrip />
      <Toolbar />
      <Bookmarks />
      <header className="flex h-[132px] items-center justify-center border-t-2 border-white bg-[linear-gradient(100deg,#3367c2,#1e0346)] pb-3 text-[72px] font-bold text-white">
        <h1 className="tracking-[-0.030em]">Weather Dashboard</h1>
      </header>
      <Dashboard />
      <div className="absolute top-[374px] right-0 h-[1426px] w-[14px] bg-linear-to-r from-transparent to-black/10" />
      <SideWidget />
      <Dock />
      <Tooltip />
      <svg viewBox="0 0 24 36" className="absolute top-[1768px] left-[2009px] h-9 w-6">
        <path d="M1.500 1.500v27l6-6 4.500 11 5-2-4.500-11H21z" fill="#000" stroke="#fff" strokeWidth="2" />
      </svg>
    </div>
  );
}
